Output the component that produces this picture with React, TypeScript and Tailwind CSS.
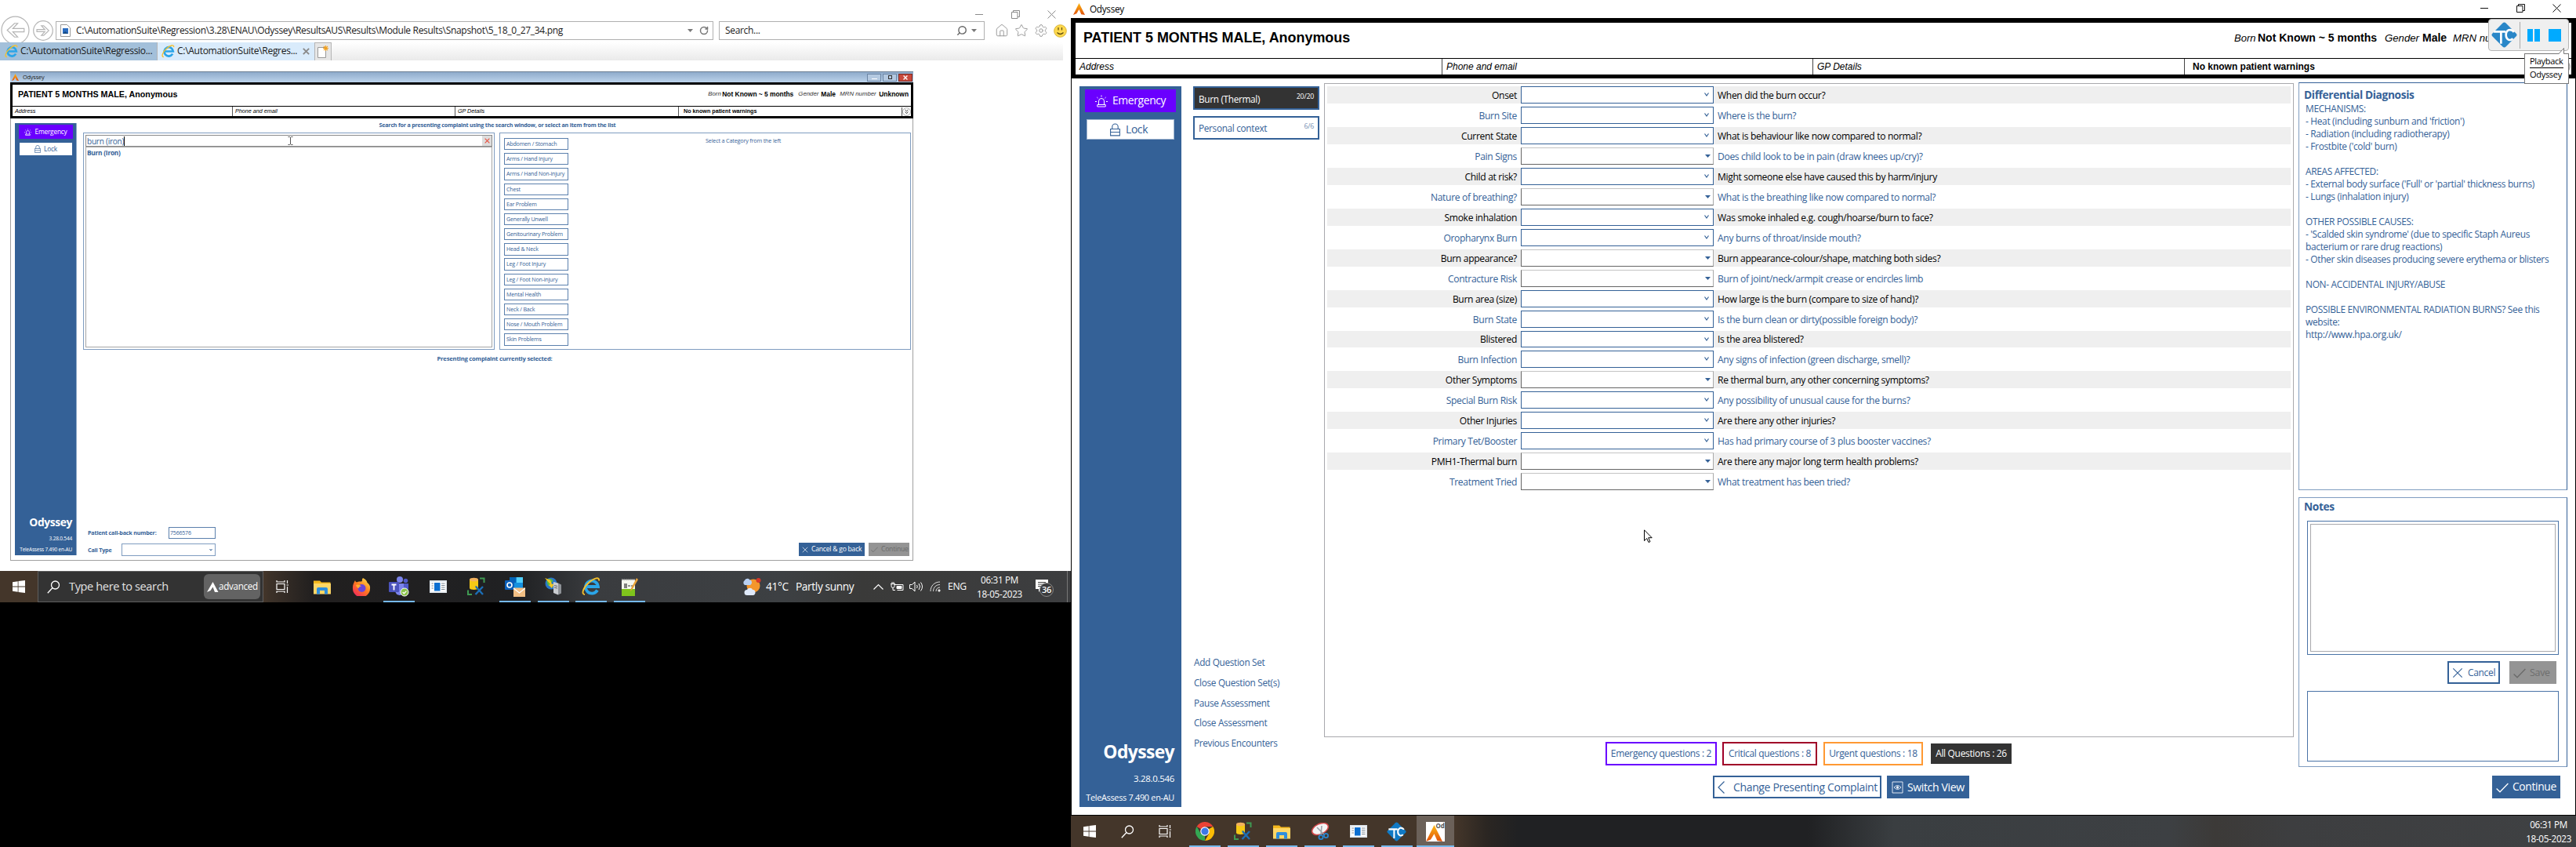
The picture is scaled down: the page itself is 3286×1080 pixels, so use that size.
import type { ReactNode } from "react";
import { Home, Star, Settings, Search, RotateCw } from "lucide-react";

/* ---------- icons ---------- */

const AMark = ({ s = 16 }: { s?: number }) => (
  <svg width={s} height={s} viewBox="0 0 16 16" className="shrink-0">
    <defs>
      <linearGradient id="amark" x1="0" y1="0" x2="0" y2="1">
        <stop offset="0" stopColor="#fdb913" />
        <stop offset="1" stopColor="#e0500c" />
      </linearGradient>
    </defs>
    <path d="M8 0 16 16 11 15.2 8 8.6 4.600 14 0 16Z" fill="url(#amark)" />
  </svg>
);

const Siren = ({ s, w = 1.2 }: { s: number; w?: number }) => (
  <svg width={s} height={s} viewBox="0 0 16 16" fill="none" stroke="#fff" strokeWidth={w} className="shrink-0">
    <path d="M4.500 12.500V8a3.500 3.500 0 0 1 7 0v4.500M2.800 15h10.400v-2.500H2.800ZM8 .5v2M2.300 3l1.300 1.200M13.700 3l-1.300 1.200M0 8.500h2M14 8.500h2" />
  </svg>
);

const Lock = ({ w, h }: { w: number; h: number }) => (
  <svg width={w} height={h} viewBox="0 0 13 16" fill="none" stroke="#346197" strokeWidth="1.100" className="shrink-0">
    <path d="M.6 7h11.800v8.400H.6ZM2.800 7V4.200a3.700 3.700 0 0 1 7.400 0V7M.6 11h11.800" />
  </svg>
);

const Check = ({ w, c }: { w: number; c: string }) => (
  <svg width={w} height={w} viewBox="0 0 16 16" fill="none" stroke={c} strokeWidth="1.300" className="shrink-0">
    <path d="M.6 9.500 5 13.800 15.400 3" />
  </svg>
);

const Cross = ({ w, c, t = 1.3 }: { w: number; c: string; t?: number }) => (
  <svg width={w} height={w} viewBox="0 0 16 16" fill="none" stroke={c} strokeWidth={t} className="shrink-0">
    <path d="m1.500 1.500 13 13M14.500 1.500l-13 13" />
  </svg>
);

const RestoreIcon = ({ c }: { c: string }) => (
  <svg width="11" height="11" viewBox="0 0 11 11" fill="none" stroke={c}>
    <path d="M.5 2.500h7.500V10.500H.5ZM2.500 2.500V.5h8v8H8" />
  </svg>
);

const WindowControls = ({ c }: { c: string }) => (
  <div className="flex items-center gap-[35px]">
    <svg width="11" height="11" viewBox="0 0 11 11" stroke={c}><path d="M0 5.500h10" /></svg>
    <RestoreIcon c={c} />
    <svg width="11" height="11" viewBox="0 0 11 11" stroke={c}><path d="m.5.5 10 10M10.500.5l-10 10" /></svg>
  </div>
);

const ArrowCircle = ({ s, dir }: { s: number; dir: "l" | "r" }) => (
  <svg width={s} height={s} viewBox="0 0 36 36" fill="none" stroke="#b5b5b5" strokeWidth={36 / s * 1.2} className="shrink-0">
    <circle cx="18" cy="18" r="17" fill="#fff" />
    <path transform={dir === "r" ? "rotate(180 18 18)" : undefined} d="M8 18 17 9.500h4L15 16h14v4H15l6 6.500h-4Z" />
  </svg>
);

const DoubleChevron = ({ s }: { s: number }) => (
  <svg width={s} height={s} viewBox="0 0 14 14" fill="none" stroke="#222" strokeWidth="1.200" className="shrink-0">
    <circle cx="7" cy="7" r="6.300" stroke="#aaa" />
    <path d="m4.500 3.800 2.500 2.400 2.500-2.400M4.500 7.300 7 9.700l2.500-2.400" />
  </svg>
);

const WinLogo = () => (
  <svg width="16" height="16" viewBox="0 0 16 16" fill="#fff"><path d="M0 2.200 6.700 1.200v6.400H0ZM7.500 1.100 16 0v7.600H7.500ZM0 8.400h6.700v6.400L0 13.800ZM7.500 8.400H16V16l-8.500-1.100Z" /></svg>
);
const Magnifier = ({ s = 17 }: { s?: number }) => (
  <svg width={s} height={s} viewBox="0 0 17 17" fill="none" stroke="#fff" strokeWidth="1.300"><circle cx="10.500" cy="6" r="5" /><path d="M7 9.500.8 16.300" /></svg>
);
const TaskView = () => (
  <svg width="16" height="16" viewBox="0 0 16 16" fill="none" stroke="#fff" strokeWidth="1.200">
    <path d="M1 4.500h10v7H1ZM1 0v2h10V0M1 16v-2h10v2M14.500 0v4M14.500 8v8M13.500 6h2.500" />
  </svg>
);
const Explorer = () => (
  <svg width="22" height="19" viewBox="0 0 22 19">
    <path d="M0 1.500h8l2 2h11.500V18H0Z" fill="#f5b81d" /><path d="M0 5h22v13.500H0Z" fill="#ffd766" />
    <path d="M4 18.500V12q0-2 2-2h10q2 0 2 2v6.500h-4V14H8v4.500Z" fill="#2f8fdd" />
  </svg>
);
const Firefox = () => (
  <svg width="24" height="24" viewBox="0 0 24 24">
    <defs><linearGradient id="ff" x1=".9" y1="0" x2=".2" y2="1"><stop offset="0" stopColor="#ffe34a" /><stop offset=".5" stopColor="#ff7a1f" /><stop offset="1" stopColor="#f0255f" /></linearGradient></defs>
    <path d="M14 1c4 2 5 4 5.500 6C22 9 23.500 11 23 14.500a11 11 0 0 1-22 0C.6 10 2.500 7 4 4c.5 1.500 1 2 2 2.500C8 5 11 6 13 5c-.5-1.500 0-3 1-4Z" fill="url(#ff)" />
    <circle cx="12.500" cy="14" r="5" fill="#6a45d8" /><path d="M5 10c3-1 5 0 7 1.500-2 0-3 1-3.500 2.500C7 14 5.500 12 5 10Z" fill="#ffb02e" />
  </svg>
);
const Teams = () => (
  <svg width="26" height="26" viewBox="0 0 26 26">
    <circle cx="14" cy="4" r="4" fill="#7b83eb" /><circle cx="21.500" cy="5.500" r="2.800" fill="#5059c9" />
    <path d="M8 9h12v9a6 6 0 0 1-12 0Z" fill="#7b83eb" /><path d="M19 9h6v6q0 4-4 4h-2Z" fill="#5059c9" />
    <rect x="0" y="7" width="13" height="13" rx="1" fill="#4b53bc" /><path d="M3.500 10.500h6M6.500 10.500v7" stroke="#fff" strokeWidth="1.800" />
    <circle cx="20" cy="20" r="5" fill="#8bc34a" stroke="#fff" /><path d="m17.600 20 1.800 1.800 3-3.200" stroke="#fff" fill="none" strokeWidth="1.300" />
  </svg>
);
const NewsApp = () => (
  <svg width="22" height="16" viewBox="0 0 22 16">
    <path d="M0 0h22v16H0Z" fill="#dfe6ec" /><path d="M1.500 2h19v12.500h-19Z" fill="#fff" /><path d="M6 3h7.500v10.500H6Z" fill="#0b6ed0" />
    <path d="M2.500 4h2.500M2.500 7h2.500M2.500 10h2.500M15 4h4.500M15 6.500h4.500M15 9h4.500M15 11.500h4.500" stroke="#7d8a96" />
  </svg>
);
const DbTool = () => (
  <svg width="23" height="24" viewBox="0 0 23 24">
    <path d="M3 3v11c0 2.500 11 2.500 11 0V3Z" fill="#f6c915" /><ellipse cx="8.500" cy="3" rx="5.500" ry="2.300" fill="#f3b25e" />
    <path d="M16 1.500h5.500V7M1 16.500V22h5" stroke="#3f9a52" strokeWidth="2" fill="none" />
    <path d="m11 12 9 10M20 12 10.500 22" stroke="#1c6fb8" strokeWidth="2.400" /><path d="m10 11 3 1-1 2Z" fill="#1c6fb8" />
  </svg>
);
const Outlook = () => (
  <svg width="26" height="26" viewBox="0 0 26 26">
    <path d="M6 1h17v15H6Z" fill="#1490df" /><path d="M14.500 1H23v7h-8.500Z" fill="#50d0ff" /><path d="M6 1h8.500v7H6Z" fill="#0364b8" />
    <rect x="0" y="5" width="12" height="12" rx="1" fill="#0a5eb8" /><circle cx="6" cy="11" r="3" fill="none" stroke="#fff" strokeWidth="1.600" />
    <path d="M11 14.500h15V26H11Z" fill="#f2bf84" /><path d="m11 15 7.500 6 7.500-6" stroke="#fff" fill="none" strokeWidth="1.300" />
  </svg>
);
const GlobeServer = () => (
  <svg width="24" height="24" viewBox="0 0 24 24">
    <circle cx="9" cy="8" r="7.500" fill="#2a77c9" /><path d="M4 4c3-3 6-2 7 0s-3 3-2 5-3 3-4 1-2-4-1-6Z" fill="#57b947" />
    <path d="m1 1 7 2.500L10 9l3-1-3 6-4-4 2-1Z" fill="#f3c822" /><path d="m12 6 6 1.500v15L12 20Z" fill="#c9ccd0" /><path d="m18 7.500 4 2v11l-4 2Z" fill="#8d9196" />
    <path d="M13 10.500 17 11.500M13 13l4 1" stroke="#666" />
  </svg>
);
const IE = ({ s = 24 }: { s?: number }) => (
  <svg width={s} height={s} viewBox="0 0 24 24" fill="none" className="shrink-0">
    <path d="M20 16.500a8 8 0 1 1 1-4.500H6" stroke="#2ba5e8" strokeWidth="3.800" />
    <path d="M4 22C-1 22 2 13 9 7S23-1 22 4.500" stroke="#f6c02c" strokeWidth="1.900" />
  </svg>
);
const NotepadPP = () => (
  <svg width="22" height="25" viewBox="0 0 22 25">
    <path d="M1 3h17v21H1Z" fill="#f4f7ef" /><path d="M1 15h17v9H1Z" fill="#7fc41c" /><path d="M1 3h17" stroke="#999" strokeWidth="2" strokeDasharray="1.500 1" />
    <path d="M5 8v6M7 8v6M9 11h3M13 11h3" stroke="#333" strokeWidth="1.200" /><path d="m20 1-7 13-1 4 3-3 7-12Z" fill="#e8a33a" />
  </svg>
);
const Weather = () => (
  <svg width="26" height="24" viewBox="0 0 26 24">
    <circle cx="15" cy="11" r="8.500" fill="#f4962c" /><circle cx="21.500" cy="4" r="3" fill="#d6372a" />
    <path d="M4 10a3.500 3.500 0 0 1 0-6c1.500-3 5-3 6.500-.5 3 0 3.500 5 .5 6.500Z" fill="#b9d0f2" /><path d="M7 23a3.500 3.500 0 0 1 0-7c1.500-3 6-3 7 0 4-1 5 6 1 7Z" fill="#dfe9fa" />
  </svg>
);
const Chrome = () => (
  <svg width="24" height="24" viewBox="0 0 24 24">
    <path d="M12 12 1.600 6A12 12 0 0 1 22.400 6H12Z" fill="#ea4335" /><path d="M12 12 22.400 6A12 12 0 0 1 12 24l5.200-9Z" fill="#fbbc05" /><path d="M12 12l0 12A12 12 0 0 1 1.600 6L6.800 15Z" fill="#34a853" />
    <circle cx="12" cy="12" r="5.800" fill="#fff" /><circle cx="12" cy="12" r="4.600" fill="#3b78e7" />
  </svg>
);
const Snip = () => (
  <svg width="24" height="22" viewBox="0 0 24 22">
    <ellipse cx="12" cy="8" rx="11" ry="6.500" transform="rotate(-25 12 8)" fill="#f4f4f4" stroke="#d2494b" strokeWidth="1.600" />
    <path d="m8 6 9 9M14 4l-1 11" stroke="#9aa4ad" strokeWidth="1.600" /><circle cx="19.500" cy="16.500" r="2.600" fill="none" stroke="#2a83cc" strokeWidth="1.800" /><circle cx="13" cy="18.500" r="2.600" fill="none" stroke="#2a83cc" strokeWidth="1.800" />
  </svg>
);
const TC = ({ w, h, c }: { w: number; h: number; c: string }) => (
  <svg width={w} height={h} viewBox="0 0 32 32">
    <path d="M14 1.500q2-2 4 0L30.500 14q2 2 0 4L18 30.500q-2 2-4 0L1.500 18q-2-2 0-4Z" fill={c} />
    <path d="M3 12h14.500M12 12v15M28 12.500q-2.500-3.500-6.500-2.500c-4.500 2-4.500 10 0 12q3 1 5-1.500" stroke="#fff" strokeWidth="2.600" fill="none" />
  </svg>
);
const OdApp = () => (
  <div className="relative flex h-[25px] w-6 items-end bg-white">
    <AMark s={21} />
    <span className="absolute top-0 right-0 font-['Open_Sans'] text-[8px] leading-[10px] font-bold text-[#555]">Od</span>
  </div>
);

/* ---------- shared ---------- */

const seg = "font-['Open_Sans','Noto_Sans',sans-serif] whitespace-nowrap tracking-[-0.027em] **:tracking-[-0.027em]";
const ari = "font-['Liberation_Sans',Arial,sans-serif] whitespace-nowrap";

function TaskIcon({ w = 49, line, active, children }: { w?: number; line?: boolean; active?: boolean; children: ReactNode }) {
  return (
    <div className="relative flex h-10 shrink-0 items-center justify-center" style={{ width: w }}>
      <div className={active ? "flex h-10 w-12 items-center justify-center bg-[#6b6159]" : "flex items-center justify-center"}>{children}</div>
      {line && <div className={active ? "absolute bottom-0 h-0.5 w-12 bg-[#76b9ed]" : "absolute bottom-0 h-0.5 w-10 bg-[#76b9ed]"} />}
    </div>
  );
}

/* ---------- left screen ---------- */

const categories = [
  "Abdomen / Stomach", "Arms / Hand Injury", "Arms / Hand Non-injury", "Chest", "Ear Problem", "Generally Unwell", "Genitourinary Problem",
  "Head & Neck", "Leg / Foot Injury", "Leg / Foot Non-injury", "Mental Health", "Neck / Back", "Nose / Mouth Problem", "Skin Problems",
];

function BrowserChrome() {
  return (
    <div className={`${seg} text-[12px] text-[#1a1a1a]`}>
      <div className="flex h-[27px] justify-end pt-[9px] pr-[19px]"><WindowControls c="#8a8a8a" /></div>
      <div className="flex h-[27px] items-start">
        <div className="-mt-[7px] ml-px h-[34px] overflow-hidden"><ArrowCircle s={37} dir="l" /></div>
        <div className="-mt-[1px] ml-1"><ArrowCircle s={26} dir="r" /></div>
        <div className="ml-[3px] flex h-6 w-[839px] items-center border border-[#b0b0b0] bg-white">
          <svg width="13" height="16" viewBox="0 0 13 16" className="ml-[5px] shrink-0"><path d="M.5.5h8l4 4v11H.5Z" fill="#fff" stroke="#999" /><path d="M3 5h7v7H3Z" fill="#2a6cc0" /><path d="M3 12l3-3 4 3Z" fill="#174a80" /></svg>
          <span className="ml-[7px] text-[12.020px]">C:\AutomationSuite\Regression\3.28\ENAU\Odyssey\ResultsAUS\Results\Module Results\Snapshot\5_18_0_27_34.png</span>
          <svg width="7" height="4" viewBox="0 0 7 4" className="ml-auto shrink-0"><path d="M0 0h7L3.500 4Z" fill="#777" /></svg>
          <RotateCw size={12} strokeWidth={3} className="mr-[5px] ml-[8px] shrink-0 text-[#777]" />
        </div>
        <div className="ml-[7px] flex h-6 w-[339px] items-center border border-[#b0b0b0] bg-white">
          <span className="ml-[7px]">Search...</span>
          <Search size={14} strokeWidth={2.4} className="ml-auto -scale-x-100 text-[#666]" />
          <svg width="7" height="4" viewBox="0 0 7 4" className="mr-[9px] ml-[5px]"><path d="M0 0h7L3.500 4Z" fill="#777" /></svg>
        </div>
        <div className="mt-[3px] ml-[13px] flex items-center gap-[7px] text-[#999]">
          <Home size={18} strokeWidth={1.3} /><Star size={18} strokeWidth={1.3} /><Settings size={18} strokeWidth={1.3} />
          <svg width="17" height="17" viewBox="0 0 17 17"><circle cx="8.500" cy="8.500" r="7.800" fill="#ffd94d" stroke="#d9b53a" /><path d="M6 4v3.500M10.500 4v3.500M4.500 10.500q4 4 8 0" stroke="#5c4a10" fill="none" strokeWidth="1.200" /></svg>
        </div>
      </div>
      <div className="flex h-[23px] w-[1356px] bg-gradient-to-b from-white to-[#eaeaea]">
        <div className="flex w-[200px] items-center bg-[#a3c0da] pl-1.5"><IE s={17} /><span className="ml-[3px] text-[12.100px]">C:\AutomationSuite\Regressio...</span></div>
        <div className="flex w-[201px] items-center border-l border-[#b5b5b5] bg-[#d9ebfb] pl-[5px]"><IE s={17} /><span className="ml-[3px] text-[12.100px]">C:\AutomationSuite\Regres...</span><span className="mr-1.5 ml-auto"><Cross w={9} c="#8a8a8a" t={3.4} /></span></div>
        <div className="flex w-[22px] items-center justify-center border border-b-0 border-[#b5b5b5] bg-[#e6e6e6]">
          <svg width="14" height="16" viewBox="0 0 14 16"><path d="M.5 2.500h10v13H.5Z" fill="#fff" stroke="#999" /><path d="M10.500 0v7M7 3.500h7M8 1l5 5M13 1 8 6" stroke="#f0a020" strokeWidth="1.100" /></svg>
        </div>
      </div>
    </div>
  );
}

function SnapshotWindow() {
  return (
    <div className="mt-[14px] ml-[13px] flex h-[624px] w-[1152px] flex-col bg-white">
      <div className={`${seg} flex h-3.5 shrink-0 items-center border-t border-[#6c7f93] bg-gradient-to-b from-[#8fabcb] to-[#bcd3eb] pl-0.5 text-[7.400px] text-[#222]`}>
        <AMark s={9} /><span className="ml-[5px]">Odyssey</span>
        <div className="ml-auto flex gap-0.5 pr-px">
          <div className="flex h-2.5 w-[18px] items-end justify-center border border-[#6c86a5] bg-[#b4c9e1] pb-0.5"><div className="h-px w-[7px] bg-white" /></div>
          <div className="flex h-2.5 w-[18px] items-center justify-center border border-[#6c86a5] bg-[#b4c9e1]"><div className="size-[5px] border border-[#333]" /></div>
          <div className="flex h-2.5 w-[18px] items-center justify-center border border-[#7c2a24] bg-[#c8493c]"><Cross w={6} c="#fff" t={3.500} /></div>
        </div>
      </div>
      <div className="h-[46px] shrink-0 bg-black py-[3px] pr-[3px] pl-[3px]">
        <div className={`${ari} flex h-[27px] items-center justify-between bg-white pr-[3px] pb-[3px] pl-[7px]`}>
          <span className="text-[10.730px] font-bold">PATIENT 5 MONTHS MALE, Anonymous</span>
          <div className="flex text-[8.380px]">
            <i className="w-[18px] text-[7.800px] text-[#333]">Born</i>
            <b className="w-[97px]">Not Known ~ 5 months</b>
            <i className="w-[29px] text-[7.800px] text-[#333]">Gender</i>
            <b className="w-[24px]">Male</b>
            <i className="w-[50px] text-[7.800px] text-[#333]">MRN number</i>
            <b>Unknown</b>
          </div>
        </div>
        <div className={`${ari} mt-px flex h-3 items-center bg-white text-[7.190px] leading-3`}>
          <i className="w-[281px] border-r border-[#555] pl-[3px]">Address</i>
          <i className="w-[284px] border-r border-[#555] pl-[3px]">Phone and email</i>
          <i className="w-[285px] border-r border-[#555] pl-[3px]">GP Details</i>
          <b className="pl-1.5">No known patient warnings</b>
          <span className="ml-auto border-l border-[#555]"><DoubleChevron s={11} /></span>
        </div>
      </div>
      <div className={`${seg} flex grow border border-t-0 border-[#a0a0a0] text-[#346197]`}>
        <div className="mt-1.5 ml-[5px] flex h-[551px] w-[79px] flex-col border-r border-[#8fa9c8] bg-[#346197]">
          <div className="mt-0.5 ml-[5px] flex h-[18px] w-[69px] items-center justify-center gap-1 bg-[#6a00ff] text-[8.400px] text-white"><Siren s={9} />Emergency</div>
          <div className="mt-[5px] ml-1.5 flex h-4 w-[67px] items-center justify-center gap-1 bg-white text-[8.400px]"><Lock w={8} h={10} />Lock</div>
          <div className="mt-auto pr-[5px] text-right text-white">
            <div className="text-[13.800px] leading-[20px] font-bold">Odyssey</div>
            <div className="mt-1 text-[6.500px] leading-[14px]">3.28.0.544</div>
            <div className="text-[6.450px] leading-[14px]">TeleAssess 7.490 en-AU</div>
          </div>
        </div>
        <div className="flex flex-col pl-2">
          <div className="mt-[3px] h-[15px] pl-px text-center text-[7.120px] leading-[10px] font-bold">Search for a presenting complaint using the search window, or select an item from the list</div>
          <div className="flex h-[277px] gap-[6px]">
            <div className="w-[525px] border border-[#7f9cc0] p-0.5">
              <div className="flex h-[15px] items-center border border-[#8b8b8b] pl-px text-[10.100px] leading-3">
                <span className="border-r border-black">burn (iron)</span>
                <svg width="7" height="11" viewBox="0 0 7 11" className="ml-[208px]" fill="none" stroke="#555"><path d="M.5.5h2l1 .8 1-.8h2M3.500 1v9M.5 10.500h2l1-.8 1 .8h2" /></svg>
                <span className="ml-auto flex h-[13px] w-3 items-center justify-center bg-[#ddd]"><Cross w={7} c="#e8503f" t={2.600} /></span>
              </div>
              <div className="h-[256px] border border-[#a5a5a5] pt-[1px] pl-px text-[8.300px] leading-3 font-bold">Burn (Iron)</div>
            </div>
            <div className="flex w-[525px] border border-[#7f9cc0] pt-1.5 pl-[5px]">
              <div className="flex flex-col gap-[3.880px]">
                {categories.map((c) => (
                  <div key={c} className="h-[15.300px] w-[82px] border border-[#5b80ad] pl-0.5 text-[7.100px] leading-[13px]">{c}</div>
                ))}
              </div>
              <div className="ml-[175px] text-[7.260px] leading-[6px]">Select a Category from the left</div>
            </div>
          </div>
          <div className="mt-[6px] pr-1.5 text-center text-[7.660px] leading-[11px] font-bold">Presenting complaint currently selected:</div>
          <div className="mt-auto mb-[5px] flex items-end justify-between">
            <div className="pl-1.5 text-[7.200px] font-bold">
              <div className="flex h-[15px] items-center"><span className="w-[103px]">Patient call-back number:</span><span className="h-[15px] w-[60px] border border-[#5b80ad] pl-px text-[7px] leading-[13px] font-normal">7566576</span></div>
              <div className="mt-1.5 flex h-4 items-center"><span className="w-[43px]">Call Type</span><span className="flex h-4 w-[120px] items-center justify-end border border-[#7f9cc0] pr-[3px]"><svg width="4" height="4" viewBox="0 0 4 4"><path d="m.5 1 1.500 2L3.500 1" fill="none" stroke="#346197" /></svg></span></div>
            </div>
            <div className="mr-[2px] flex gap-[5px] text-[8.600px]">
              <div className="flex h-[17px] w-[84px] items-center gap-1 bg-[#346197] pl-1 text-white"><Cross w={8} c="#fff" />Cancel &amp; go back</div>
              <div className="flex h-[17px] w-[52px] items-center gap-[4px] bg-[#949494] pl-[3px] text-[#6a6a6a]"><Check w={9} c="#6a6a6a" />Continue</div>
            </div>
          </div>
        </div>
      </div>
    </div>
  );
}

function LeftTaskbar() {
  return (
    <div className={`${seg} flex h-10 items-center bg-[linear-gradient(90deg,#44362a_0px,#44362a_336px,#3c3128_345px,#211f1f_400px,#202123_660px,#3a3c3f_760px,#3d4043_1000px,#3a3a39_1100px,#3d3e40_1366px)] text-white`}>
      <div className="flex w-12 justify-center"><WinLogo /></div>
      <div className="flex h-10 w-72 items-center border border-[#5e5e5e] bg-[#333] pl-[11px]">
        <Magnifier />
        <span className="ml-[11px] text-[14.600px] text-[#e2e2e2]">Type here to search</span>
        <span className="mr-[3px] ml-auto flex h-8 w-[72px] items-center rounded-md bg-[#636363] pl-1 text-[12px]"><svg width="15" height="13" viewBox="0 0 15 13"><path d="M7.500 0 14.500 13h-4.500L7.500 6.500 4.500 11 0 13Z" fill="#fff" /></svg><span className="text-[11.700px]">advanced</span></span>
      </div>
      <TaskIcon w={47}><TaskView /></TaskIcon>
      <TaskIcon w={55}><Explorer /></TaskIcon>
      <TaskIcon w={45}><Firefox /></TaskIcon>
      <TaskIcon w={52} line><Teams /></TaskIcon>
      <TaskIcon w={47}><NewsApp /></TaskIcon>
      <TaskIcon w={50}><DbTool /></TaskIcon>
      <TaskIcon w={50} line><Outlook /></TaskIcon>
      <TaskIcon w={47} line><GlobeServer /></TaskIcon>
      <TaskIcon line><IE /></TaskIcon>
      <TaskIcon line><NotepadPP /></TaskIcon>
      <div className="ml-[119px] flex items-center text-[13.700px]"><Weather /><span className="ml-[5px] w-[29px]">41°C</span><span className="ml-[9px] w-[76px]">Partly sunny</span></div>
      <svg width="13" height="8" viewBox="0 0 13 8" fill="none" stroke="#fff" strokeWidth="1.200" className="ml-[23px]"><path d="m.5 7.500 6-6 6 6" /></svg>
      <svg width="17" height="13" viewBox="0 0 17 13" fill="none" stroke="#fff" className="ml-[9px]"><path d="M5 3.500h11v7H8.500M0 2.500h6M1 2.500v3q0 2 2 2t2-2v-3M2 0v2M4 0v2M3 7.500v3h3" /><path d="M8 5.500h6v3H8Z" fill="#fff" /></svg>
      <svg width="17" height="14" viewBox="0 0 17 14" fill="none" stroke="#fff" className="ml-[7px]"><path d="M.5 4.500h3L7 1v12L3.500 9.500h-3ZM9.500 5q1.500 2 0 4M12 3q3 4 0 8M14.500 1.500q4 5.500 0 11" /></svg>
      <svg width="14" height="14" viewBox="0 0 14 14" fill="none" stroke="#ddd" className="ml-[9px]"><path d="M1 13C1 6 6 1 13 1M4.500 13c0-5 3.500-8.500 8.500-8.500M8 13c0-3 2-5 5-5" /><circle cx="12" cy="12" r="1.200" fill="#fff" /></svg>
      <span className="ml-[9px] w-[24px] text-[12.200px]">ENG</span>
      <div className="ml-[13px] w-[58px] text-center text-[11.700px] leading-[18px]">06:31 PM<br />18-05-2023</div>
      <div className="relative ml-[17px] size-[26px]">
        <svg width="17" height="18" viewBox="0 0 17 18" className="mt-1"><path d="M0 0h16v12H7l-3 4v-4H0Z" fill="#fff" /><path d="M3 3.500h10M3 6h10M3 8.500h6" stroke="#444" /></svg>
        <span className="absolute top-2 left-[5px] flex size-[18px] items-center justify-center rounded-full border border-[#888] bg-[#3a3b3d] text-[11px] font-semibold">36</span>
      </div>
      <div className="ml-auto h-10 w-[5px] border-l border-[#777]" />
    </div>
  );
}

/* ---------- right screen ---------- */

const questions: [string, string, boolean][] = [
  ["Onset", "When did the burn occur?", true],
  ["Burn Site", "Where is the burn?", true],
  ["Current State", "What is behaviour like now compared to normal?", true],
  ["Pain Signs", "Does child look to be in pain (draw knees up/cry)?", false],
  ["Child at risk?", "Might someone else have caused this by harm/injury", true],
  ["Nature of breathing?", "What is the breathing like now compared to normal?", false],
  ["Smoke inhalation", "Was smoke inhaled e.g. cough/hoarse/burn to face?", true],
  ["Oropharynx Burn", "Any burns of throat/inside mouth?", true],
  ["Burn appearance?", "Burn appearance-colour/shape, matching both sides?", false],
  ["Contracture Risk", "Burn of joint/neck/armpit crease or encircles limb", false],
  ["Burn area (size)", "How large is the burn (compare to size of hand)?", true],
  ["Burn State", "Is the burn clean or dirty(possible foreign body)?", true],
  ["Blistered", "Is the area blistered?", true],
  ["Burn Infection", "Any signs of infection (green discharge, smell)?", true],
  ["Other Symptoms", "Re thermal burn, any other concerning symptoms?", false],
  ["Special Burn Risk", "Any possibility of unusual cause for the burns?", true],
  ["Other Injuries", "Are there any other injuries?", true],
  ["Primary Tet/Booster", "Has had primary course of 3 plus booster vaccines?", true],
  ["PMH1-Thermal burn", "Are there any major long term health problems?", false],
  ["Treatment Tried", "What treatment has been tried?", false],
];

function QuestionRow({ q, i }: { q: [string, string, boolean]; i: number }) {
  const [label, text, blue] = q;
  return (
    <div className={`flex items-stretch text-[12.080px] ${i === 12 ? "h-[21px] leading-[22px]" : "h-[22px] leading-[23px]"} ${i % 2 ? "" : "bg-[#efefef] text-black"}`}>
      <span className="w-[242px] text-right">{label}</span>
      <span className={`ml-[5px] flex w-[246px] justify-end border bg-white ${blue ? "border-[#346197]" : "border-[#666] border-t-[#c4c4c4] border-r-[#aaa]"}`}>
        {blue ? (
          <svg width="6" height="6" viewBox="0 0 6 6" className="mt-[7px] mr-[5px]"><path d="M.5.500 3 4 5.500.5" fill="none" stroke="#346197" strokeWidth="1.200" /></svg>
        ) : (
          <svg width="7" height="4" viewBox="0 0 7 4" className="mt-2 mr-[3px]"><path d="M0 0h7L3.500 4Z" fill="#346197" /></svg>
        )}
      </span>
      <span className="ml-[5px]">{text}</span>
    </div>
  );
}

const diagnosis = [
  "MECHANISMS:", "- Heat (including sunburn and 'friction')", "- Radiation (including radiotherapy)", "- Frostbite ('cold' burn)", "",
  "AREAS AFFECTED:", "- External body surface ('Full' or 'partial' thickness burns)", "- Lungs (inhalation injury)", "",
  "OTHER POSSIBLE CAUSES:", "- 'Scalded skin syndrome' (due to specific Staph Aureus", "bacterium or rare drug reactions)",
  "- Other skin diseases producing severe erythema or blisters", "", "NON- ACCIDENTAL INJURY/ABUSE", "",
  "POSSIBLE ENVIRONMENTAL RADIATION BURNS? See this", "website:", "http://www.hpa.org.uk/",
];

function OdysseyBody() {
  return (
    <div className={`${seg} flex h-[940px] border border-t-0 border-black bg-white text-[#346197]`}>
      <div className="mt-2.5 ml-2.5 flex h-[919px] w-[130px] shrink-0 flex-col bg-[#346197]">
        <div className="mt-1 ml-[7px] flex h-[29px] w-[116px] items-center bg-[#6a00ff] pl-[13px] text-[13.900px] text-white"><Siren s={16} w={1} /><span className="ml-1.5">Emergency</span></div>
        <div className="mt-[9px] ml-[9px] flex h-[26px] w-[112px] items-center border border-[#9fb4cf] bg-white pl-[29px] text-[13.900px]"><Lock w={13} h={17} /><span className="mt-px ml-[7px]">Lock</span></div>
        <div className="mt-auto pr-[9px] text-right text-white">
          <div className="text-[22.900px] leading-[30px] font-bold">Odyssey</div>
          <div className="mt-[7px] text-[11.500px] leading-6">3.28.0.546</div>
          <div className="text-[10.900px] leading-6">TeleAssess 7.490 en-AU</div>
        </div>
      </div>
      <div className="mt-2.5 ml-[15px] flex h-[919px] w-[161px] shrink-0 flex-col text-[11.800px]">
        <div className="flex h-[30px] justify-between border-2 border-[#346197] bg-[#333] px-[5px] leading-[28px] text-white"><span>Burn (Thermal)</span><span className="text-[8.800px] leading-[22px]">20/20</span></div>
        <div className="mt-2 flex h-[30px] justify-between border-2 border-[#346197] px-[5px] leading-[27px]"><span>Personal context</span><span className="text-[8.800px] leading-[22px] text-[#7791b3]">6/6</span></div>
        <div className="mt-auto mb-[68px] flex flex-col pl-px leading-[25.800px]">
          <span>Add Question Set</span><span>Close Question Set(s)</span><span>Pause Assessment</span><span>Close Assessment</span><span>Previous Encounters</span>
        </div>
      </div>
      <div className="ml-1.5 flex w-[1237px] shrink-0 flex-col">
        <div className="mt-1.5 flex h-[834px] flex-col gap-1 border border-[#a9a9ad] px-[3px] pt-[3px]">
          {questions.map((q, i) => <QuestionRow key={q[0]} q={q} i={i} />)}
        </div>
        <div className="mt-1.5 flex items-center pl-[359px] text-[11.990px]">
          <div className="flex h-[30px] w-[142px] items-center justify-center border-2 border-[#6a00ff]">Emergency questions : 2</div>
          <div className="ml-[7px] flex h-[30px] w-[121px] items-center justify-center border-2 border-[#a00028]">Critical questions : 8</div>
          <div className="ml-[8px] flex h-[30px] w-[127px] items-center justify-center border-2 border-[#ff9933]">Urgent questions : 18</div>
          <div className="ml-2.5 flex h-[26px] w-[103px] items-center justify-center bg-[#333] text-white">All Questions : 26</div>
        </div>
        <div className="mt-[13px] flex pl-[496px] text-[14.050px]">
          <div className="flex h-[29px] w-[215px] items-center border-2 border-[#346197] pl-1"><svg width="9" height="16" viewBox="0 0 9 16" fill="none" stroke="#346197" strokeWidth="1.200"><path d="M8.500.5 1 8l7.500 7.500" /></svg><span className="mt-px ml-[11px]">Change Presenting Complaint</span></div>
          <div className="ml-[7px] flex h-[29px] w-[105px] items-center bg-[#346197] pl-1.5 text-white"><svg width="15" height="16" viewBox="0 0 15 16" fill="none" stroke="#dfe7f1" strokeWidth="1"><path d="M1 1h13v14H1ZM3 8q4.500-5 9 0-4.500 5-9 0Z" /><circle cx="7.500" cy="8" r="1.300" fill="#fff" /></svg><span className="mt-px ml-[5px]">Switch View</span></div>
        </div>
      </div>
      <div className="ml-1.5 flex w-[343px] shrink-0 flex-col">
        <div className="mt-[5px] h-[520px] border border-[#346197] border-b-[#7f9cc0] border-l-[#7f9cc0] pt-1.5 pl-1.5">
          <div className="text-[13.750px] leading-[18px] font-bold">Differential Diagnosis</div>
          <div className="pl-0.5 text-[11.920px] leading-4">{diagnosis.map((d, i) => <div key={i} className="h-4">{d}</div>)}</div>
        </div>
        <div className="mt-[9px] flex h-[344px] flex-col border border-[#346197] border-t-[#7f9cc0] border-b-[#7f9cc0] border-l-[#7f9cc0] px-2.5 pt-0.5">
          <div className="-ml-1 text-[13.750px] leading-[18px] font-bold">Notes</div>
          <div className="mt-[9px] h-[171px] border border-[#4a73a6] p-[3px]"><div className="h-full border border-[#a9a9ad]" /></div>
          <div className="mt-2 flex justify-end gap-3 pr-[3px] text-[12.500px]">
            <div className="flex h-[29px] w-[67px] items-center border-2 border-[#346197] pl-1 text-[12px]"><Cross w={14} c="#346197" /><span className="mt-px ml-[6px]">Cancel</span></div>
            <div className="flex h-[29px] w-[60px] items-center bg-[#949494] pl-[5px] text-[#6e6e6e]"><Check w={16} c="#6a6a6a" /><span className="mt-px ml-[5px]">Save</span></div>
          </div>
          <div className="mt-[9px] h-[90px] border border-[#4a73a6]" />
        </div>
        <div className="mt-[11px] mr-[9px] flex h-[29px] w-[87px] items-center self-end bg-[#346197] pl-[5px] text-[13.900px] text-white"><Check w={16} c="#fff" /><span className="ml-[5px]">Continue</span></div>
      </div>
    </div>
  );
}

function RightScreen() {
  return (
    <div className="relative flex h-[1080px] w-[1920px] flex-col bg-white">
      <div className={`${seg} flex h-[23px] items-center justify-between pr-[19px] pl-0.5 text-[11.800px]`}>
        <div className="flex items-center gap-1.5 pl-px"><AMark s={15} />Odyssey</div>
        <div className="-mt-0.5"><WindowControls c="#111" /></div>
      </div>
      <div className={`${ari} h-[77px] bg-black pt-1.5 pr-1.5 pb-[5px] pl-1.5`}>
        <div className="flex h-[45px] items-center bg-white pb-[7px] pl-2.5">
          <span className="w-[1468px] text-[17.930px] font-bold">PATIENT 5 MONTHS MALE, Anonymous</span>
          <div className="flex items-baseline text-[14px]">
            <i className="w-[30px] text-[13px]">Born</i>
            <b className="w-[162px]">Not Known ~ 5 months</b>
            <i className="w-12 text-[13.200px]">Gender</i>
            <b className="w-[39px]">Male</b>
            <i className="text-[13.200px]">MRN nu</i>
          </div>
        </div>
        <div className="mt-px flex h-5 items-center bg-white text-[11.990px] leading-5">
          <i className="w-[468px] border-r border-[#444] pl-[5px]">Address</i>
          <i className="w-[473px] border-r border-[#444] pl-[5px]">Phone and email</i>
          <i className="w-[474px] border-r border-[#444] pl-[5px]">GP Details</i>
          <b className="pl-2.5">No known patient warnings</b>
          <span className="ml-auto pr-px"><DoubleChevron s={18} /></span>
        </div>
      </div>
      <OdysseyBody />
      <div className={`${seg} flex h-10 items-center bg-[linear-gradient(90deg,#44362a_0px,#44362a_490px,#2b2622_530px,#202123_570px,#202123_940px,#3a3e41_1050px,#3d4043_1400px,#3c3a38_1460px,#3d3e40_1560px,#3f4143_1920px)] text-white`}>
        <TaskIcon w={48}><WinLogo /></TaskIcon>
        <TaskIcon w={48}><Magnifier /></TaskIcon>
        <TaskIcon w={48}><TaskView /></TaskIcon>
        <div className="w-0.5" />
        <TaskIcon line><Chrome /></TaskIcon>
        <TaskIcon line><DbTool /></TaskIcon>
        <TaskIcon line><Explorer /></TaskIcon>
        <TaskIcon line><Snip /></TaskIcon>
        <TaskIcon line><NewsApp /></TaskIcon>
        <TaskIcon line><TC w={25} h={25} c="#1079c4" /></TaskIcon>
        <TaskIcon line active><OdApp /></TaskIcon>
        <div className="mr-1.5 ml-auto text-center text-[11.700px] leading-[18px]">06:31 PM<br />18-05-2023</div>
      </div>
      {/* playback toolbar floating over the header */}
      <div className="absolute top-6 left-[1808px] flex h-[41px] w-[103px] items-center rounded border border-[#b5b5b5] bg-[#efefef]">
        <div className="ml-[3px]"><TC w={33} h={33} c="#2a87c8" /></div>
        <div className="ml-[3px] h-[34px] w-px bg-[#a9a9a9]" />
        <div className="ml-[9px] h-4 w-[7px] bg-[#00aaff]" /><div className="ml-0.5 h-4 w-[7px] bg-[#00aaff]" />
        <div className="ml-[11px] size-4 bg-[#00aaff]" />
      </div>
      <div className={`${seg} absolute top-[68px] left-[1854px] h-[39px] w-[57px] border border-[#777] bg-white px-1.5 text-[11px] leading-[16px] text-black`}>
        <svg width="9" height="8" viewBox="0 0 9 8" className="absolute -top-[8px] right-[3px]"><path d="M0 8 6.500.5V8Z" fill="#fff" /><path d="M0 7.500 6.500.5V7.500" fill="none" stroke="#777" /></svg>
        <div className="h-[18px] border-b border-black pt-px">Playback</div><div>Odyssey</div>
      </div>
      {/* mouse pointer */}
      <svg width="12" height="18" viewBox="0 0 12 18" className="absolute top-[675px] left-[731px]"><path d="M.5.8v13.700l3.200-3 2.300 5 2-.9-2.300-4.900h4.500Z" fill="#fff" stroke="#000" /></svg>
    </div>
  );
}

export default function App() {
  return (
    <div className="flex h-[1080px] w-[3286px] overflow-hidden bg-black">
      <div className="flex h-[768px] w-[1366px] shrink-0 flex-col bg-white">
        <BrowserChrome />
        <div className="h-[651px]"><SnapshotWindow /></div>
        <LeftTaskbar />
      </div>
      <RightScreen />
    </div>
  );
}
